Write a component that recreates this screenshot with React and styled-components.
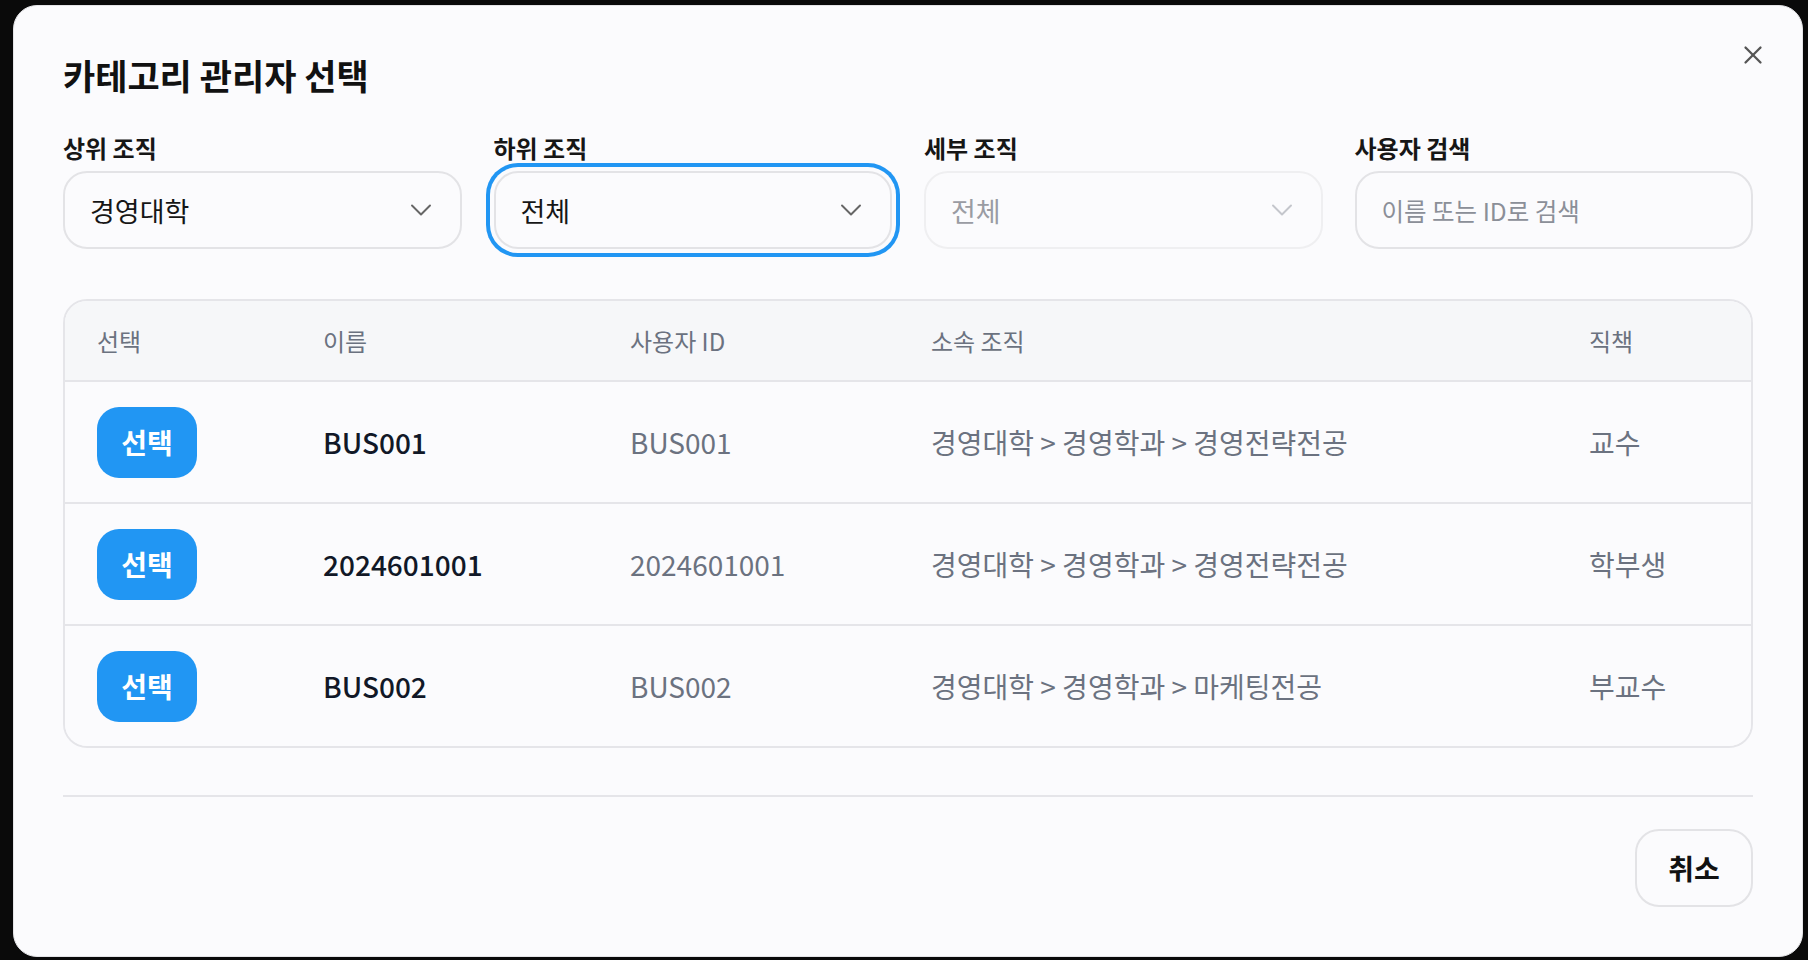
import React from 'react';
import styled, { createGlobalStyle } from 'styled-components';
import { ChevronDown, X } from 'lucide-react';

const GlobalStyle = createGlobalStyle`
  html, body { margin: 0; padding: 0; background: #0a0a0a; }
  body { font-family: "Noto Sans CJK KR", "Noto Sans", sans-serif; }
  * { box-sizing: border-box; }
`;

const Overlay = styled.div`
  width: 1808px;
  height: 960px;
  background: #0a0a0a;
  display: flex;
  padding: 5px 5px 3px 13px;
`;

const Modal = styled.div`
  position: relative;
  width: 1790px;
  height: 952px;
  background: #fbfbfd;
  border: 1px solid #e4e4e7;
  border-radius: 24px;
  padding: 49px 49px 49px 49px;
  display: flex;
  flex-direction: column;
`;

const Title = styled.h2`
  margin: 0;
  font-size: 35px;
  line-height: 40px;
  font-weight: 700;
  color: #111;
`;

const CloseButton = styled.button`
  position: absolute;
  top: 29px;
  right: 29px;
  width: 40px;
  height: 40px;
  border: none;
  background: transparent;
  display: flex;
  align-items: center;
  justify-content: center;
  color: #555;
  padding: 0;
`;

const Filters = styled.div`
  margin-top: 37px;
  display: grid;
  grid-template-columns: repeat(4, 1fr);
  gap: 32px;
`;

const Field = styled.div`
  display: flex;
  flex-direction: column;
  gap: 7px;
`;

const Label = styled.label`
  font-size: 24px;
  line-height: 32px;
  font-weight: 600;
  color: #161616;
`;

const SelectBox = styled.div`
  height: 78px;
  border: 2px solid ${p => (p.$disabled ? '#efeff1' : '#e3e3e6')};
  border-radius: 24px;
  background: #fbfbfd;
  padding: 0 21px 0 25px;
  display: flex;
  align-items: center;
  justify-content: space-between;
  font-size: 27px;
  color: ${p => (p.$disabled ? '#9a9ca3' : '#161616')};
  box-shadow: ${p => (p.$focused ? '0 0 0 4px #fbfbfd, 0 0 0 8px #2196f3' : 'none')};
`;

const Chevron = styled(ChevronDown)`
  color: ${p => (p.$disabled ? '#c4c6cc' : '#666')};
`;

const SearchInput = styled.input`
  height: 78px;
  border: 2px solid #e3e3e6;
  border-radius: 24px;
  background: #fbfbfd;
  padding: 0 25px;
  font-family: inherit;
  font-size: 24.5px;
  color: #161616;
  outline: none;
  &::placeholder { color: #8b8f98; }
`;

const Table = styled.div`
  margin-top: 50px;
  border: 2px solid #e5e5e9;
  border-radius: 24px;
  overflow: hidden;
`;

const Row = styled.div`
  display: grid;
  grid-template-columns: 226px 307px 301px 658px 1fr;
  align-items: center;
  height: ${p => (p.$head ? '79px' : '122px')};
  background: ${p => (p.$head ? '#f6f7f9' : '#fbfbfd')};
  border-top: ${p => (p.$head ? 'none' : '2px solid #e5e5e9')};
`;

const HeadCell = styled.div`
  padding-left: 32px;
  font-size: 24px;
  color: #6b7280;
`;

const Cell = styled.div`
  padding-left: 32px;
  font-size: 28px;
  color: ${p => (p.$strong ? '#111827' : '#6b7280')};
  font-weight: ${p => (p.$strong ? 500 : 400)};
  white-space: nowrap;
`;

const PickButton = styled.button`
  width: 100px;
  height: 71px;
  border: none;
  border-radius: 22px;
  background: #2196f3;
  color: #fff;
  font-family: inherit;
  font-size: 28px;
  font-weight: 700;
  padding: 0;
`;

const Divider = styled.hr`
  margin: 47px 0 0 0;
  border: none;
  border-top: 2px solid #e5e5e9;
`;

const Footer = styled.div`
  margin-top: 32px;
  display: flex;
  justify-content: flex-end;
`;

const CancelButton = styled.button`
  width: 118px;
  height: 78px;
  border: 2px solid #e3e3e6;
  border-radius: 24px;
  background: #fbfbfd;
  font-family: inherit;
  font-size: 28px;
  font-weight: 600;
  color: #111;
  padding: 0;
`;

const users = [
  { name: 'BUS001', id: 'BUS001', org: '경영대학 > 경영학과 > 경영전략전공', role: '교수' },
  { name: '2024601001', id: '2024601001', org: '경영대학 > 경영학과 > 경영전략전공', role: '학부생' },
  { name: 'BUS002', id: 'BUS002', org: '경영대학 > 경영학과 > 마케팅전공', role: '부교수' },
];

export default function App() {
  return (
    <>
      <GlobalStyle />
      <Overlay>
        <Modal>
          <CloseButton aria-label="닫기">
            <X size={30} strokeWidth={1.8} />
          </CloseButton>
          <Title>카테고리 관리자 선택</Title>
          <Filters>
            <Field>
              <Label>상위 조직</Label>
              <SelectBox>
                <span>경영대학</span>
                <Chevron size={36} strokeWidth={1.3} />
              </SelectBox>
            </Field>
            <Field>
              <Label>하위 조직</Label>
              <SelectBox $focused>
                <span>전체</span>
                <Chevron size={36} strokeWidth={1.3} />
              </SelectBox>
            </Field>
            <Field>
              <Label>세부 조직</Label>
              <SelectBox $disabled>
                <span>전체</span>
                <Chevron size={36} strokeWidth={1.3} $disabled />
              </SelectBox>
            </Field>
            <Field>
              <Label>사용자 검색</Label>
              <SearchInput placeholder="이름 또는 ID로 검색" />
            </Field>
          </Filters>
          <Table>
            <Row $head>
              <HeadCell>선택</HeadCell>
              <HeadCell>이름</HeadCell>
              <HeadCell>사용자 ID</HeadCell>
              <HeadCell>소속 조직</HeadCell>
              <HeadCell>직책</HeadCell>
            </Row>
            {users.map(u => (
              <Row key={u.name}>
                <Cell><PickButton>선택</PickButton></Cell>
                <Cell $strong>{u.name}</Cell>
                <Cell>{u.id}</Cell>
                <Cell>{u.org}</Cell>
                <Cell>{u.role}</Cell>
              </Row>
            ))}
          </Table>
          <Divider />
          <Footer>
            <CancelButton>취소</CancelButton>
          </Footer>
        </Modal>
      </Overlay>
    </>
  );
}
